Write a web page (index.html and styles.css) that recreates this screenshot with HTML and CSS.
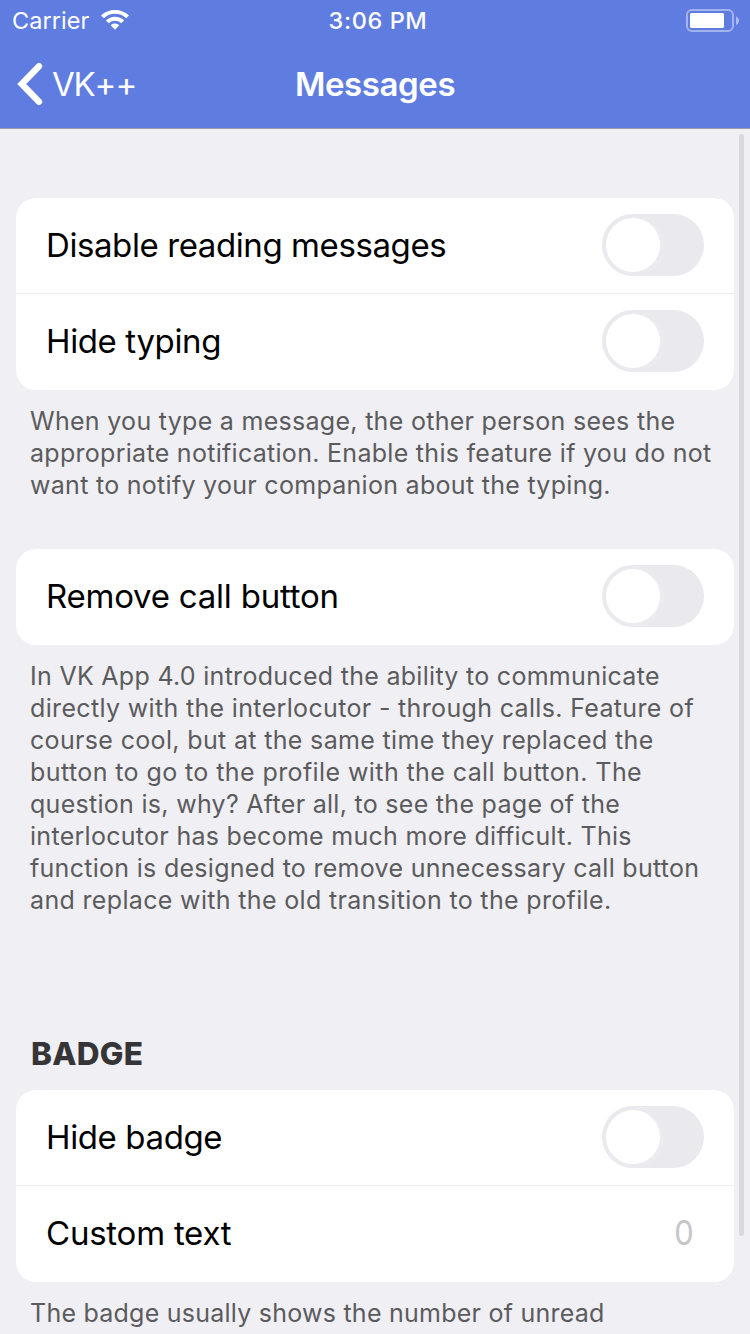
FILE: index.html
```
<!DOCTYPE html>
<html lang="en">
<head>
<meta charset="utf-8">
<title>Messages</title>
<link rel="stylesheet" href="styles.css">
</head>
<body>
<header class="top">
  <div class="status">
    <div class="carrier"><span class="carrier-name">Carrier</span>
      <svg class="wifi" width="28" height="20" viewBox="0 0 28 20" fill="#fff"><path d="M14 0C8.700 0 3.700 2 0 5.400L2.900 8.300A16 16 0 0 1 25.100 8.300L28 5.400C24.300 2 19.300 0 14 0Z"/><path d="M14 6.700c-3.500 0-6.700 1.400-9.100 3.700l2.900 2.900a9 9 0 0 1 12.400 0l2.900-2.900A13 13 0 0 0 14 6.700Z"/><path d="M14 13.400c-1.700 0-3.200.6-4.300 1.800L14 19.700l4.300-4.500a6.200 6.200 0 0 0-4.300-1.800Z"/></svg>
    </div>
    <span class="clock">3:06 PM</span>
    <svg class="battery" width="53" height="24" viewBox="0 0 53 24"><rect x="1" y="1" width="46" height="21" rx="5" fill="none" stroke="#fff" stroke-opacity=".42" stroke-width="2"/><rect x="4" y="4" width="34" height="15" rx="1.500" fill="#fff"/><path d="M50 7.500c4 1.500 4 7 0 8.500Z" fill="#fff" fill-opacity=".5"/></svg>
  </div>
  <nav class="nav">
    <div class="back"><svg width="26" height="42" viewBox="0 0 26 42"><path d="M22 3.200 4.700 21 22 38.800" fill="none" stroke="#fff" stroke-width="6.400" stroke-linecap="round" stroke-linejoin="miter"/></svg><span class="back-label">VK<span class="plus">++</span></span></div>
    <h1 class="title">Messages</h1>
  </nav>
</header>
<main class="content">
  <section class="card">
    <div class="row"><span class="label long">Disable reading messages</span><span class="switch"></span></div>
    <div class="row"><span class="label">Hide typing</span><span class="switch"></span></div>
  </section>
  <p class="note typing-note">When you type a message, the other person sees the<br>appropriate notification. Enable this feature if you do not<br>want to notify your companion about the typing.</p>
  <section class="card">
    <div class="row"><span class="label wide">Remove call button</span><span class="switch"></span></div>
  </section>
  <p class="note call-note">In VK App 4.0 introduced the ability to communicate<br><span class="loose">directly with the interlocutor - through calls. Feature of</span><br><span class="loose">course cool, but at the same time they replaced the</span><br><span class="looser">button to go to the profile with the call button. The</span><br>question is, why? After all, to see the page of the<br>interlocutor has become much more difficult. This<br>function is designed to remove unnecessary call button<br><span class="loose">and replace with the old transition to the profile.</span></p>
  <h2 class="heading">BADGE</h2>
  <section class="card">
    <div class="row"><span class="label">Hide badge</span><span class="switch"></span></div>
    <div class="row"><span class="label wide">Custom text</span><span class="value">0</span></div>
  </section>
  <p class="note badge-note">The badge usually shows the number of unread</p>
</main>
<div class="scrollbar"></div>
</body>
</html>
```
FILE: styles.css
```
* { box-sizing: border-box; }
html, body { margin: 0; height: 1334px; overflow: hidden; }
body { position: relative; background: #efeff4; font-family: Inter, "Liberation Sans", sans-serif; color: #000; white-space: nowrap; }
.top { height: 129px; background: #5f7de0; color: #fff; border-bottom: 1px solid #9a9ca8; }
.status { height: 41px; display: grid; grid-template-columns: 1fr auto 1fr; align-items: center; padding: 0 11px 0 12px; }
.carrier { display: flex; align-items: center; gap: 11px; font-size: 23.5px; }
.carrier-name { width: 78px; letter-spacing: 0.05px; }
.wifi { margin-top: -1px; }
.clock { font-size: 23.5px; font-weight: 500; letter-spacing: 0.6px; padding-left: 5px; }
.battery { justify-self: end; }
.nav { height: 85px; display: grid; grid-template-columns: 1fr auto 1fr; align-items: center; padding: 0 17px; }
.back { display: flex; align-items: center; gap: 9px; font-size: 33px; }
.back-label { font-feature-settings: "calt" 0; letter-spacing: -1.2px; }
.plus { letter-spacing: -0.8px; }
.title { margin: 0; font-size: 33px; font-weight: 600; letter-spacing: -0.4px; }
.content { padding: 69px 16px 0; }
.card { background: #fff; border-radius: 20px; overflow: hidden; }
.row { height: 96px; display: flex; align-items: center; justify-content: space-between; padding: 0 30px; }
.row:not(:last-child) { border-bottom: 1px solid #ececef; }
.label { font-size: 33px; letter-spacing: -0.38px; margin-bottom: 2px; }
.long { letter-spacing: -0.41px; }
.wide { letter-spacing: -0.23px; }
.switch { width: 102px; height: 62px; border-radius: 31px; background: #e9e9ee; display: flex; align-items: center; padding-left: 4px; margin-bottom: 2px; }
.row:not(:last-child) .switch { margin-bottom: 1px; }
.switch::before { content: ""; width: 54px; height: 54px; border-radius: 50%; background: #fff; box-shadow: 3px 1px 8px rgba(255, 255, 255, 0.25); }
.value { font-size: 33.5px; color: #c6c6ca; padding-right: 10px; margin-bottom: 3px; transform: scaleX(0.92); }
.note { margin: 15px 14px 0; font-size: 25px; line-height: 32px; letter-spacing: 0.29px; color: #5b5b5d; }
.loose { letter-spacing: 0.34px; }
.looser { letter-spacing: 0.41px; }
.typing-note { margin-bottom: 48px; }
.call-note { margin-bottom: 116px; }
.badge-note { letter-spacing: 0.24px; }
.heading { margin: 0 15px 14px; font-size: 31.5px; line-height: 44px; font-weight: 800; letter-spacing: 0.3px; color: #353537; }
.scrollbar { position: absolute; right: 6px; top: 134px; width: 5px; height: 1102px; border-radius: 3px; background: #d8d8dd; }
```
